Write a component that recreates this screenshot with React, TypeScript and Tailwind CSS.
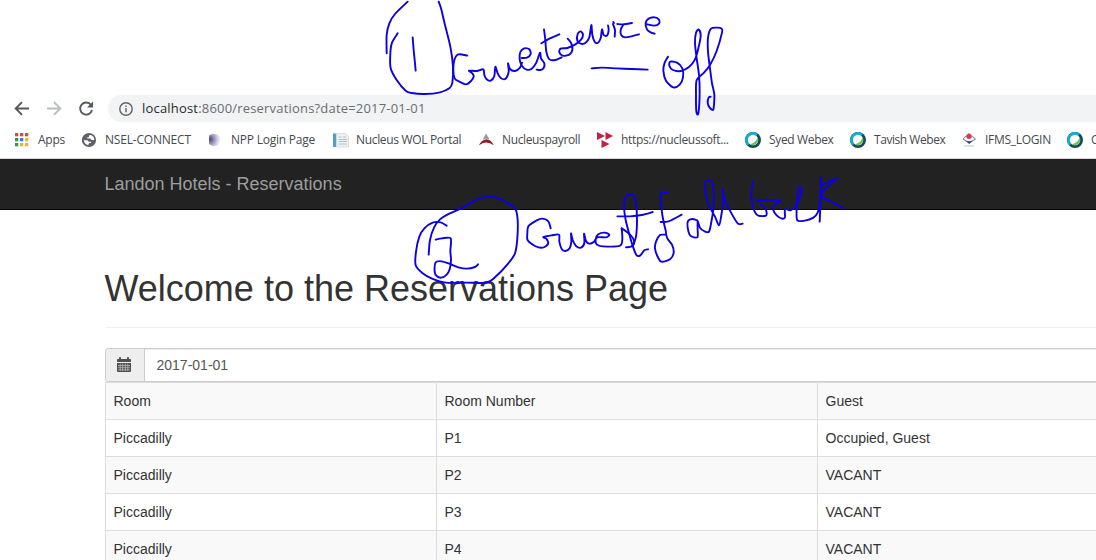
import React from "react";

const rows = [
  ["Room", "Room Number", "Guest"],
  ["Piccadilly", "P1", "Occupied, Guest"],
  ["Piccadilly", "P2", "VACANT"],
  ["Piccadilly", "P3", "VACANT"],
  ["Piccadilly", "P4", "VACANT"],
];

function AppsIcon() {
  const colors = ["#d94a3d", "#d94a3d", "#d94a3d", "#2f9a54", "#2f7fd6", "#e2b93a", "#2f9a54", "#e2b93a", "#e2b93a"];
  return (
    <svg viewBox="0 0 16 16" className="size-4">
      {colors.map((c, i) => (
        <rect key={i} x={(i % 3) * 5} y={1 + Math.floor(i / 3) * 5} width="3.3" height="3.3" fill={c} />
      ))}
    </svg>
  );
}

function GlobeIcon() {
  return (
    <svg viewBox="0 0 16 16" className="size-4">
      <circle cx="7" cy="8" r="7.1" fill="#5f6368" />
      <path d="M7.2 3.2q2.6-.8 4.3 1.9.9 1.3.8 3H9.6L8.3 6.6H5.6L5 5.2h1.8z" fill="#fff" />
      <path d="M1.8 8.3h3.6l1.5 1.5h2v1.3H7.2l-1 1.9q-3.9-.6-4.4-4.7" fill="#fff" />
    </svg>
  );
}

function OrbIcon() {
  return (
    <svg viewBox="0 0 16 16" className="size-4">
      <defs>
        <radialGradient id="orb" cx=".1" cy=".45" r=".9">
          <stop offset="0" stopColor="#4a4380" />
          <stop offset=".35" stopColor="#8f8bb4" />
          <stop offset=".7" stopColor="#cfcde0" />
          <stop offset="1" stopColor="#fafafd" />
        </radialGradient>
      </defs>
      <path d="M1 3.5Q4 1 8 2q4.6 1 4.6 6T8 14q-4 .8-7-2z" fill="url(#orb)" />
    </svg>
  );
}

function PageIcon() {
  return (
    <svg viewBox="0 0 16 16" className="size-4">
      <path d="M3.5 1.5h9l3 3V15h-12z" fill="#edf1f4" stroke="#cbd2d8" strokeWidth=".7" />
      <path d="M0 1.5h3V15H0z" fill="#4f9fc6" />
      <path d="M3 1.5h1V15H3z" fill="#c1dce9" />
      <path d="M5.5 5h3M5.5 7.5H14M5.5 9.5H14M5.5 12H14M10 5h3" stroke="#aab4be" strokeWidth=".8" />
    </svg>
  );
}

function PeakIcon() {
  return (
    <svg viewBox="0 0 16 16" className="size-4">
      <path d="M7 1.5 10.5 7Q7 6 3.6 7.8z" fill="#9b9b9b" />
      <path d="M0 13.3Q2 8 7.5 7.2q4.5.2 7.3 6.1Q7 7.8 0 13.3" fill="#941c24" />
    </svg>
  );
}

function TrianglesIcon() {
  return (
    <svg viewBox="0 0 16 16" className="size-4" fill="#c51f42">
      <path d="M0 0v8l8-4zM8.5 0v8l7.5-4zM4.5 8v8l8-4z" />
    </svg>
  );
}

function WebexIcon() {
  return (
    <svg viewBox="0 0 16 16" className="size-4">
      <circle cx="8" cy="8" r="8" fill="#124e62" />
      <path d="M2.3 13.6A8 8 0 0 1 12.8 1.6L11.2 4.2A5 5 0 0 0 4.5 11.8z" fill="#12add3" />
      <circle cx="8" cy="8" r="5.2" fill="#fff" />
      <path d="M12.6 5.6A5.2 5.2 0 0 1 5 12.2Q11 10.8 12.6 5.6" fill="#70c04b" />
    </svg>
  );
}

function IfmsIcon() {
  return (
    <svg viewBox="0 0 16 16" className="size-4">
      <path d="M1 7Q7-.5 13.5 7 7 12.5 1 7" fill="#f3f3f9" stroke="#626a96" strokeWidth=".9" />
      <circle cx="7" cy="4.3" r="2.6" fill="#d9394f" />
      <path d="M5.8 2.3 7 1l1.2 1.3" fill="#d9394f" />
      <path d="M3.2 8.6Q7 10.5 11.2 8.6L7.2 12z" fill="#333f7c" />
      <path d="M2 14h10" stroke="#b7c4dc" strokeWidth="1" />
    </svg>
  );
}

const bookmarks = [
  { label: "Apps", icon: <AppsIcon />, box: "w-[67px]", gap: "gap-[7px]", spacing: "tracking-[-0.25px]" },
  { label: "NSEL-CONNECT", icon: <GlobeIcon />, box: "w-[126px]", gap: "gap-[7px]", spacing: "tracking-[-0.2px]" },
  { label: "NPP Login Page", icon: <OrbIcon />, box: "w-[125px]", gap: "gap-[7px]", spacing: "tracking-[-0.23px]" },
  { label: "Nucleus WOL Portal", icon: <PageIcon />, box: "w-[146px]", gap: "gap-[7px]", spacing: "tracking-[-0.33px]" },
  { label: "Nucleuspayroll", icon: <PeakIcon />, box: "w-[118px]", gap: "gap-[7px]", spacing: "tracking-[-0.36px]" },
  { label: "https://nucleussoft...", icon: <TrianglesIcon />, box: "w-[148px]", gap: "gap-2", spacing: "tracking-[-0.33px]" },
  { label: "Syed Webex", icon: <WebexIcon />, box: "w-[105px]", gap: "gap-2", spacing: "tracking-[-0.35px]" },
  { label: "Tavish Webex", icon: <WebexIcon />, box: "w-[112px]", gap: "gap-2", spacing: "tracking-[-0.45px]" },
  { label: "IFMS_LOGIN", icon: <IfmsIcon />, box: "w-[105px]", gap: "gap-[7px]", spacing: "tracking-[-0.3px]" },
  { label: "C", icon: <WebexIcon />, box: "w-[60px]", gap: "gap-2", spacing: "tracking-[-0.3px]" },
];

function Toolbar() {
  return (
    <div className="flex h-[27px] items-center">
      <svg viewBox="0 0 94 28" className="h-7 w-[94px] shrink-0" fill="none" strokeWidth="1.9">
        <path d="M29 13.5H16M22 7.2 15.7 13.5l6.3 6.3" stroke="#55585c" />
        <path d="M47 13.5h13M54 7.2l6.3 6.3-6.3 6.3" stroke="#b9bbbd" />
        <path d="M91 10A6 6 0 1 0 92 15" stroke="#55585c" />
        <path d="M93 6.5v6h-6z" fill="#55585c" />
      </svg>
      <div className="ml-[14px] flex h-full flex-1 items-center rounded-l-full bg-[#f1f3f4] pl-[11px]">
        <svg viewBox="0 0 14 14" className="size-[14px]" fill="none" stroke="#5f6368" strokeWidth="1.4">
          <circle cx="7" cy="7" r="6.2" />
          <path d="M7 6v4.3M7 3.5V5" />
        </svg>
        <span className="ml-[9px] font-['Open_Sans','Noto_Sans',sans-serif] text-[13px] leading-none tracking-[0.19px] whitespace-nowrap text-[#6a6d71]">
          <span className="text-[#292b2e]">localhost</span>:8600/reservations?date=2017-01-01
        </span>
      </div>
    </div>
  );
}

function BookmarksBar() {
  return (
    <div className="flex h-[37px] items-center overflow-hidden border-b border-[#d6d8da] pl-[15px]">
      {bookmarks.map((b) => (
        <div key={b.label} className={`flex shrink-0 items-center ${b.box} ${b.gap}`}>
          <span className="shrink-0">{b.icon}</span>
          <span className={`font-['Open_Sans','Noto_Sans',sans-serif] text-[12px] leading-4 whitespace-nowrap text-[#46494d] ${b.spacing}`}>{b.label}</span>
        </div>
      ))}
    </div>
  );
}

function CalendarIcon() {
  return (
    <svg viewBox="0 0 14 15" className="mr-0.5 mb-px h-[15px] w-[14px]">
      <path d="M0 5V3q0-1 1-1h1V1q0-1 1-1t1 1v1h6V1q0-1 1-1t1 1v1h1q1 0 1 1v2z" fill="#505050" />
      <path d="M0 6h14v8q0 1-1 1H1q-1 0-1-1z" fill="#505050" />
      <path d="M1 8.5h12M1 10.7h12M1 12.9h12M3.2 6.5V14M5.7 6.5V14M8.3 6.5V14M10.8 6.5V14" stroke="#d0d0d0" strokeWidth=".6" />
    </svg>
  );
}

// Turns a list of pen positions into a smooth curve that passes through each of them.
function curve(points: string) {
  const p = points.split(" ").map((s) => s.split(",").map(Number));
  let d = `M${p[0][0]} ${p[0][1]}`;
  for (let i = 0; i < p.length - 1; i++) {
    const a = p[i - 1] ?? p[i];
    const b = p[i];
    const c = p[i + 1];
    const e = p[i + 2] ?? c;
    d += `C${b[0] + (c[0] - a[0]) / 7} ${b[1] + (c[1] - a[1]) / 7} ${c[0] - (e[0] - b[0]) / 7} ${c[1] - (e[1] - b[1]) / 7} ${c[0]} ${c[1]}`;
  }
  return d;
}

const ink = [
  {
    transform: "translate(370 0) scale(.33333)",
    strokes: [
      "113,5 75,42 58,70 50,105 50,160",
      "83,100 66,128 61,160 62,205 80,240 107,272 125,279 165,282 210,277 238,265 247,248 249,200 241,140 225,75 213,25 206,5",
      "128,112 131,150 134,180 137,212",
      "292,167 265,163 253,180 250,210 254,235 268,245 288,253 303,243 311,230 307,220 297,212 320,213 340,208 343,225 350,238 362,242 373,228 376,200 383,220 393,235 407,236 416,215 414,190 420,207 435,213 450,203 456,188",
      "455,174 471,173 482,162 478,148 463,145 451,156 449,178 456,198 470,209 485,206 499,188 510,158 513,175 523,190 521,204 512,210 500,209",
    ],
  },
  {
    transform: "translate(540 0) scale(.33333)",
    strokes: [
      "12,88 16,120 19,155 28,178 46,180 65,172",
      "4,130 28,116 58,103",
      "83,116 94,130 97,150 88,164 68,167 58,157 62,146 82,144 105,134 123,119 129,104 122,94 113,102 112,122 122,131 136,129 148,112 154,75 157,105 164,125 173,129 182,115 186,88 191,105 201,107 206,90 204,76",
      "219,72 225,90 224,110",
      "220,66 222,69",
      "232,72 250,73 276,69",
      "250,74 242,90 244,106 255,112 275,109 297,103",
      "322,73 343,77 357,71 357,59 344,52 326,56 317,69 321,88 332,97 344,101",
      "155,205 185,203 230,205 275,207 323,209",
      "384,170 374,188 370,212 378,242 400,262 419,254 429,232 427,205 411,188 391,185 388,197 399,210 422,213 447,201 465,178 475,145 482,108 477,89 468,98 465,130 470,175 477,225 479,280 475,340 469,334 468,285 470,240 492,218 510,195 530,153 546,98 545,86 532,83 513,86 504,113 504,155 510,205 516,250 523,284 520,328 509,323 503,308 506,293 512,290",
    ],
  },
  {
    transform: "translate(400 185) scale(.33333)",
    strokes: [
      "140,122 122,112 98,113 73,130 58,155 48,200 47,241 68,265 96,281 138,293 200,293 259,293 285,277 325,235 345,205 352,160 353,105 347,74 325,55 290,38 263,34 231,43 190,67 150,85 120,103 102,128 90,165 86,209",
      "107,164 126,160 152,160 151,198 153,225 149,253 140,269 124,278 110,273 104,260 107,232 125,229 150,237 175,247 200,251 225,246 234,238",
      "452,130 445,109 425,101 405,109 385,124 382,145 383,166 405,183 428,188 444,177 440,162 430,156 455,151 477,149 478,170 485,192 496,198 509,190 514,170 513,145 518,165 528,183 543,188 553,174 552,146 558,168 568,176 582,170 592,157 618,157 628,149 614,143 595,148 587,163 590,178 608,184 660,182 667,160 665,130",
    ],
  },
  {
    transform: "translate(620 165) scale(.33333)",
    strokes: [
      "5,190 24,203 37,217 43,232 35,244 18,247",
      "40,238 48,215 51,165 48,115 41,92 28,87 15,101 12,125 17,165 30,215 40,248 50,271 61,271 73,256 84,253",
      "-8,154 30,154 65,150 98,141",
      "144,84 124,84 123,112 127,150 133,180 138,207 120,210 108,230 105,250 112,273 124,290 150,283 161,263 156,239 143,222 138,207",
      "122,171 146,169 185,149",
      "232,166 217,162 204,168 203,188 211,212 232,217 233,195 233,169 240,188 252,198 267,200 275,165 281,125 281,75 275,50 262,47 254,57 258,90 266,120 285,155 297,181 304,150 309,112 308,70 312,98 330,137 353,175 368,176",
      "400,49 394,80 396,110 404,140 415,152 438,152 439,138 432,125 422,119",
      "410,108 450,105 482,108",
      "480,110 463,120 460,135 470,151 486,161 495,157 495,132 511,136 528,120 542,93 544,71 538,66 532,98 530,130 532,166 558,166 580,158 593,143 600,112 603,37 602,100 599,170",
      "654,39 637,53 608,78",
      "607,60 640,43",
      "608,77 607,96 640,113 670,130",
    ],
  },
];

function Ink() {
  return (
    <svg viewBox="0 0 1096 560" className="pointer-events-none absolute inset-0 h-[560px] w-[1096px]" fill="none" stroke="#0c00e4" strokeWidth="5.7" strokeLinecap="round" strokeLinejoin="round">
      {ink.map((g) => (
        <g key={g.transform} transform={g.transform}>
          {g.strokes.map((s) => (
            <path key={s} d={curve(s)} />
          ))}
        </g>
      ))}
    </svg>
  );
}

export default function App() {
  return (
    <div className="relative h-[560px] w-[1096px] overflow-hidden bg-white font-['Liberation_Sans',Arial,sans-serif] text-[14px] text-[#333]">
      <div className="pt-[95px]">
        <Toolbar />
        <BookmarksBar />
      </div>
      <nav className="flex h-[51px] items-center border-b border-[#080808] bg-[#222] pl-[104.5px]">
        <span className="text-[18px] leading-5 text-[#9d9d9d]">Landon Hotels - Reservations</span>
      </nav>
      <main className="pl-[105px]">
        <h1 className="-ml-[0.5px] pt-[59px] text-[36px] leading-10 font-normal whitespace-nowrap">Welcome to the Reservations Page</h1>
        <div className="mt-[18px] border-t border-[#eee]" />
        <div className="mt-5 flex h-[34px] rounded-l-[4px] border border-r-0 border-[#ccc]">
          <div className="flex w-[39px] items-center justify-center rounded-l-[3px] border-r border-[#ccc] bg-[#eee]">
            <CalendarIcon />
          </div>
          <div className="flex flex-1 items-center pl-[11.5px] text-[#555] shadow-[inset_0_1px_1px_rgba(0,0,0,0.075)]">2017-01-01</div>
        </div>
        <table className="w-[991px] table-fixed border-separate border-spacing-0 border-t border-l border-[#ddd]">
          <colgroup>
            <col className="w-[331px]" />
            <col className="w-[381px]" />
            <col />
          </colgroup>
          <tbody>
            {rows.map((r, i) => (
              <tr key={i} className="odd:bg-[#f9f9f9]">
                {r.map((c, j) => (
                  <td key={j} className="h-[37px] border-r border-b border-[#ddd] pb-px pl-[7.5px] leading-5 last:border-r-0">{c}</td>
                ))}
              </tr>
            ))}
          </tbody>
        </table>
      </main>
      <Ink />
    </div>
  );
}
